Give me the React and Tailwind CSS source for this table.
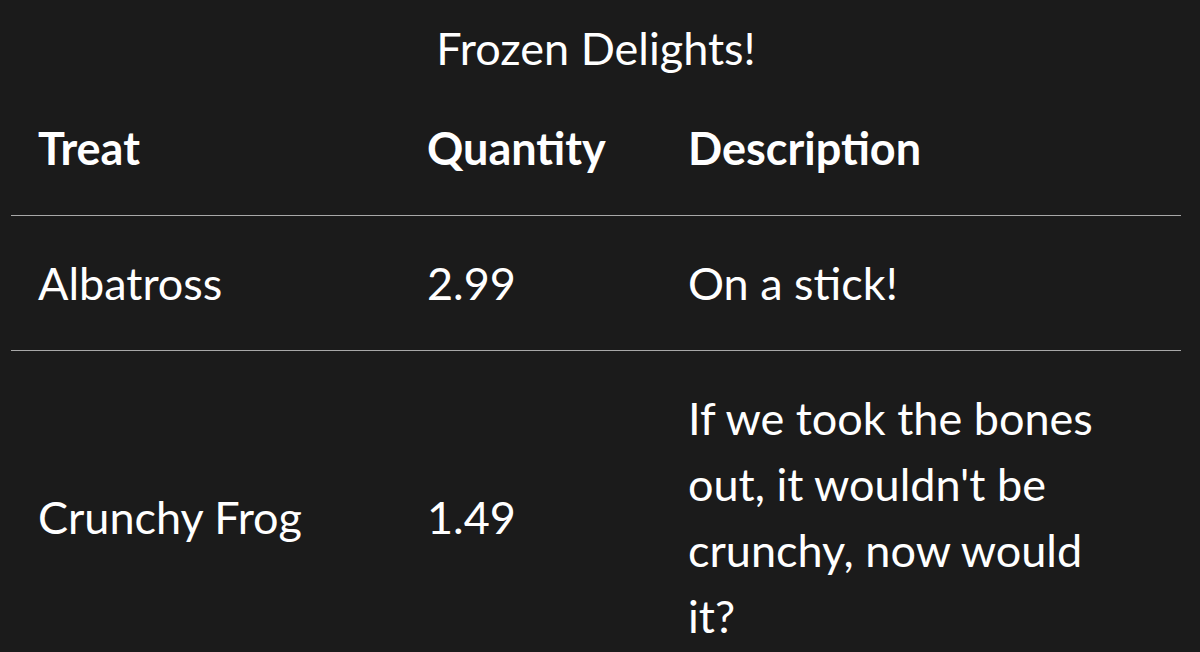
const rows = [
  { treat: "Albatross", qty: "2.99", desc: "On a stick!" },
  {
    treat: "Crunchy Frog",
    qty: "1.49",
    desc: "If we took the bones out, it wouldn't be crunchy, now would it?",
  },
];

export default function App() {
  return (
    <div className="min-h-screen bg-[#1b1b1b] pt-[15px] pl-[11px] font-['Lato',sans-serif] text-[45px] leading-[66px] text-white">
      <table className="w-[1170px] border-collapse text-left">
        <caption className="font-normal">Frozen Delights!</caption>
        <colgroup>
          <col className="w-[389px]" />
          <col className="w-[261px]" />
          <col className="w-[520px]" />
        </colgroup>
        <thead>
          <tr className="border-b border-[#a8a8a8]">
            <th className="py-[34px] pl-[27px] font-bold">Treat</th>
            <th className="py-[34px] pl-[27px] font-bold">Quantity</th>
            <th className="py-[34px] pl-[27px] font-bold">Description</th>
          </tr>
        </thead>
        <tbody>
          {rows.map((r) => (
            <tr key={r.treat} className="border-b border-[#a8a8a8]">
              <td className="py-[34px] pl-[27px] align-middle">{r.treat}</td>
              <td className="py-[34px] pl-[27px] align-middle">{r.qty}</td>
              <td className="py-[34px] pl-[27px] align-middle">
                <div className="max-w-[425px]">{r.desc}</div>
              </td>
            </tr>
          ))}
        </tbody>
      </table>
    </div>
  );
}
